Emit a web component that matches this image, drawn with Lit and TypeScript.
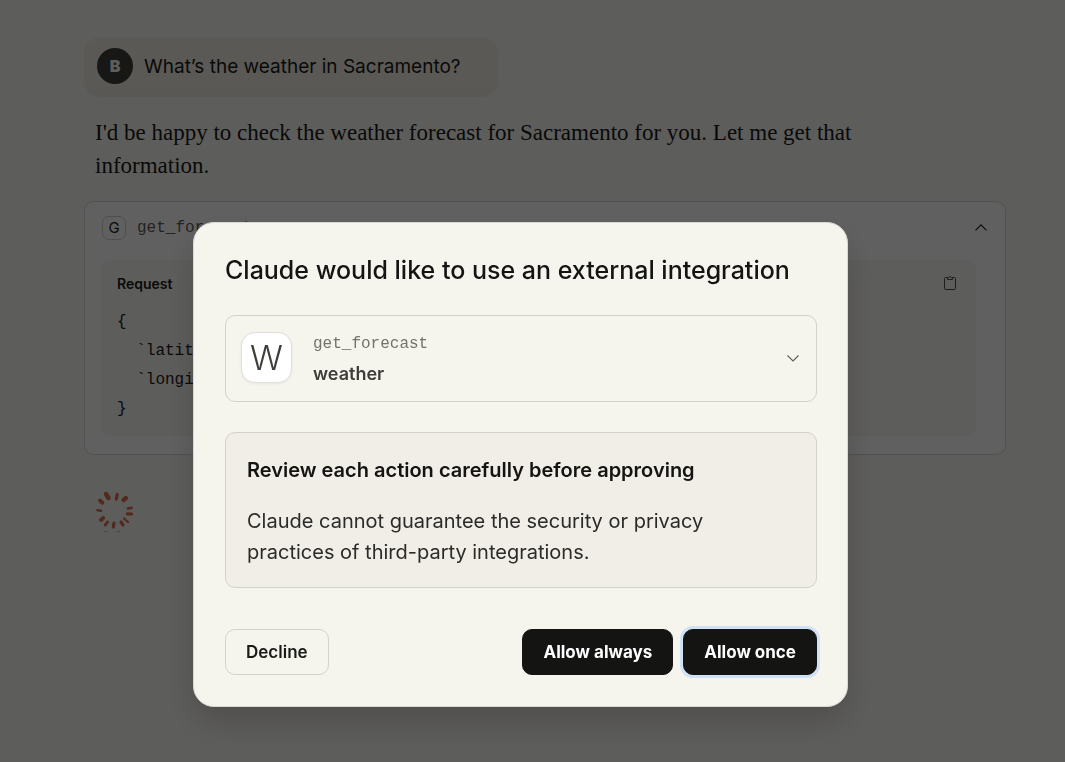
import { LitElement, html, css, svg } from "lit";
import { customElement, state } from "lit/decorators.js";

const RAYS: Array<[number, number, number, number, number]> = [
  [11, 4, 13.5, 8, 4.5],
  [22.3, 4.5, 21.3, 9, 3.2],
  [31, 8, 28.5, 10, 4.2],
  [36.5, 17.8, 33, 18.5, 2.8],
  [36.5, 24, 32.3, 23.8, 3.2],
  [33, 32, 29, 28.5, 2.2],
  [28, 35, 26, 32, 3.2],
  [18.3, 37, 19, 33, 3.2],
  [10.3, 35, 12.5, 32, 2.8],
  [6, 30, 8.2, 28, 3.8],
  [2.5, 20.2, 6, 20.8, 2.6],
  [5, 10.5, 7.5, 12.8, 3.8],
];

@customElement("app-root")
export class AppRoot extends LitElement {
  @state() private open = true;

  static styles = css`
    :host {
      display: block;
      min-height: 100vh;
      box-sizing: border-box;
      background: #f5f4ef;
      color: #1a1a18;
      font-family: Inter, "Liberation Sans", sans-serif;
    }
    * {
      box-sizing: border-box;
    }
    button {
      font: inherit;
      color: inherit;
      cursor: pointer;
    }
    h2,
    h3,
    p,
    pre {
      margin: 0;
    }
    svg {
      display: block;
    }
    .page {
      display: flex;
      flex-direction: column;
      align-items: flex-start;
      padding: 37px 59px 0 84px;
    }
    .bubble {
      display: flex;
      gap: 11px;
      padding: 11px 37px 11px 13px;
      border-radius: 16px;
      background: linear-gradient(#eeece2, #ebe8de);
      font-size: 19px;
      line-height: 38px;
    }
    .avatar {
      width: 36px;
      height: 36px;
      border-radius: 50%;
      background: #3d3d3a;
      color: #f5f4ed;
      font-size: 16px;
      line-height: 36px;
      font-weight: 900;
      text-align: center;
    }
    .reply {
      max-width: 800px;
      padding: 19px 11px;
      font-family: "Liberation Serif", serif;
      font-size: 23px;
      line-height: 33px;
    }
    .tool {
      align-self: stretch;
      padding: 13px 29px 18px 16px;
      border: 1px solid #d6d4cc;
      border-radius: 10px;
      background: #fdfdfd;
    }
    .tool-head {
      display: flex;
      align-items: center;
      gap: 11px;
      height: 26px;
      margin: 0 -17px 19px 1px;
    }
    .glyph {
      width: 24px;
      height: 24px;
      border: 1px solid #cfcdc6;
      border-radius: 7px;
      font-size: 15px;
      line-height: 22px;
      text-align: center;
    }
    .mono {
      font-family: "Liberation Mono", monospace;
      font-size: 16px;
    }
    .tool-name {
      flex: 1;
      color: #5e5d59;
    }
    .icon-button {
      display: grid;
      place-items: center;
      width: 24px;
      height: 24px;
      padding: 0;
      border: 0;
      background: none;
    }
    .request {
      padding: 11px 14px 12px 16px;
      border-radius: 8px;
      background: #f5f4ef;
    }
    .request-head {
      display: flex;
      align-items: center;
      justify-content: space-between;
      margin-bottom: 13px;
      font-size: 14px;
      font-weight: 600;
    }
    .code {
      line-height: 29px;
    }
    .spinner {
      margin: 35px 0 0 11px;
    }
    .overlay {
      position: fixed;
      inset: 0;
      display: flex;
      justify-content: center;
      align-items: flex-start;
      padding: 222px 24px 0 0;
      background: rgba(0, 0, 0, 0.62);
    }
    .modal {
      width: 655px;
      padding: 31px 30px 31px 31px;
      border: 1px solid #d9d8d0;
      border-radius: 21px;
      background: #f5f4ed;
      box-shadow: 0 16px 32px rgba(0, 0, 0, 0.16);
    }
    .title {
      font-size: 25px;
      line-height: 32px;
      font-weight: 500;
      color: #141413;
    }
    .integration {
      display: flex;
      align-items: center;
      gap: 21px;
      width: 100%;
      height: 87px;
      margin-top: 29px;
      padding: 0 11px 2px 15px;
      border: 1px solid #d3d2ca;
      border-radius: 10px;
      background: none;
      text-align: left;
      line-height: 29px;
    }
    .logo {
      width: 51px;
      height: 51px;
      border: 1px solid #e0dfd9;
      border-radius: 14px;
      background: #fff;
      box-shadow: 0 1px 3px rgba(0, 0, 0, 0.06);
      color: #3d3d3a;
      font-size: 34px;
      font-weight: 300;
      line-height: 50px;
      text-align: center;
    }
    .names {
      display: flex;
      flex-direction: column;
      flex: 1;
      padding-top: 2px;
      color: #3d3d3a;
      font-size: 18px;
      font-weight: 600;
    }
    .names .mono {
      color: #73726c;
      font-size: 16px;
      font-weight: 400;
    }
    .chevron {
      width: 24px;
      color: #5e5d59;
    }
    .notice {
      margin-top: 30px;
      padding: 22px 21px 19px;
      border: 1px solid #d3d2ca;
      border-radius: 10px;
      background: #f0eee6;
    }
    .notice-title {
      margin-bottom: 20px;
      font-size: 20px;
      line-height: 31px;
      font-weight: 600;
      color: #141413;
    }
    .notice-text {
      max-width: 500px;
      color: #2b2b29;
      font-size: 20px;
      line-height: 31px;
    }
    .actions {
      display: flex;
      gap: 10px;
      margin-top: 41px;
    }
    .action {
      height: 46px;
      padding: 0 20px;
      border: 1px solid #141413;
      border-radius: 10px;
      background: #141413;
      color: #fff;
      font-size: 17px;
      font-weight: 700;
      white-space: nowrap;
    }
    .decline {
      margin-right: auto;
      border-color: #d3d2ca;
      background: none;
      color: #1a1a18;
      font-weight: 600;
    }
    .preferred {
      box-shadow: 0 0 0 3px #d0e2f5;
    }
  `;

  private chevron(d: string) {
    return html`<svg width="24" height="24" viewBox="0 0 24 24" fill="none" stroke="currentColor" stroke-width="1.1" aria-hidden="true"><path d=${d} /></svg>`;
  }

  private close() {
    this.open = false;
  }

  private renderDialog() {
    return html`
      <div class="overlay">
        <section class="modal" role="dialog" aria-modal="true" aria-labelledby="title">
          <h2 class="title" id="title">Claude would like to use an external integration</h2>
          <button class="integration">
            <span class="logo">W</span>
            <span class="names"><span class="mono">get_forecast</span><span>weather</span></span>
            <span class="chevron">${this.chevron("M6.5 9.5l5.5 5.5 5.5-5.5")}</span>
          </button>
          <div class="notice">
            <h3 class="notice-title">Review each action carefully before approving</h3>
            <p class="notice-text">Claude cannot guarantee the security or privacy practices of third-party integrations.</p>
          </div>
          <div class="actions">
            <button class="action decline" @click=${this.close}>Decline</button>
            <button class="action" @click=${this.close}>Allow always</button>
            <button class="action preferred" @click=${this.close}>Allow once</button>
          </div>
        </section>
      </div>
    `;
  }

  render() {
    return html`
      <main class="page">
        <div class="bubble"><span class="avatar">B</span><span>What’s the weather in Sacramento?</span></div>
        <p class="reply">I'd be happy to check the weather forecast for Sacramento for you. Let me get that information.</p>
        <section class="tool">
          <div class="tool-head">
            <span class="glyph">G</span>
            <span class="mono tool-name">get_forecast</span>
            <button class="icon-button" aria-label="Collapse">${this.chevron("M6.5 14.3L12 8.8l5.5 5.5")}</button>
          </div>
          <div class="request">
            <div class="request-head">
              <span>Request</span>
              <button class="icon-button" aria-label="Copy">
                <svg width="14" height="14" viewBox="0 0 14 14" fill="none" stroke="#4d4c48" aria-hidden="true">
                  <path d="M4.5 1.5H2.5a1 1 0 0 0-1 1v10a1 1 0 0 0 1 1h9a1 1 0 0 0 1-1v-10a1 1 0 0 0-1-1h-2" />
                  <path d="M4.5 1.5V3.5h5V1.5H8.3a1.4 1.4 0 0 0-2.600 0z" />
                </svg>
              </button>
            </div>
            <pre class="mono code">{
  \`latitude\`: 38.58,
  \`longitude\`: -121.49
}</pre>
          </div>
        </section>
        <svg class="spinner" width="40" height="42" viewBox="0 0 40 42" stroke="#d96b4c" stroke-linecap="round" role="img" aria-label="Loading">
          ${RAYS.map(([x1, y1, x2, y2, w]) => svg`<line x1=${x1} y1=${y1} x2=${x2} y2=${y2} stroke-width=${w} />`)}
          <path d="M9.5 41.5h3M21.5 41.5h3" stroke="#3d3d3a" stroke-opacity="0.3" />
        </svg>
      </main>
      ${this.open ? this.renderDialog() : null}
    `;
  }
}
